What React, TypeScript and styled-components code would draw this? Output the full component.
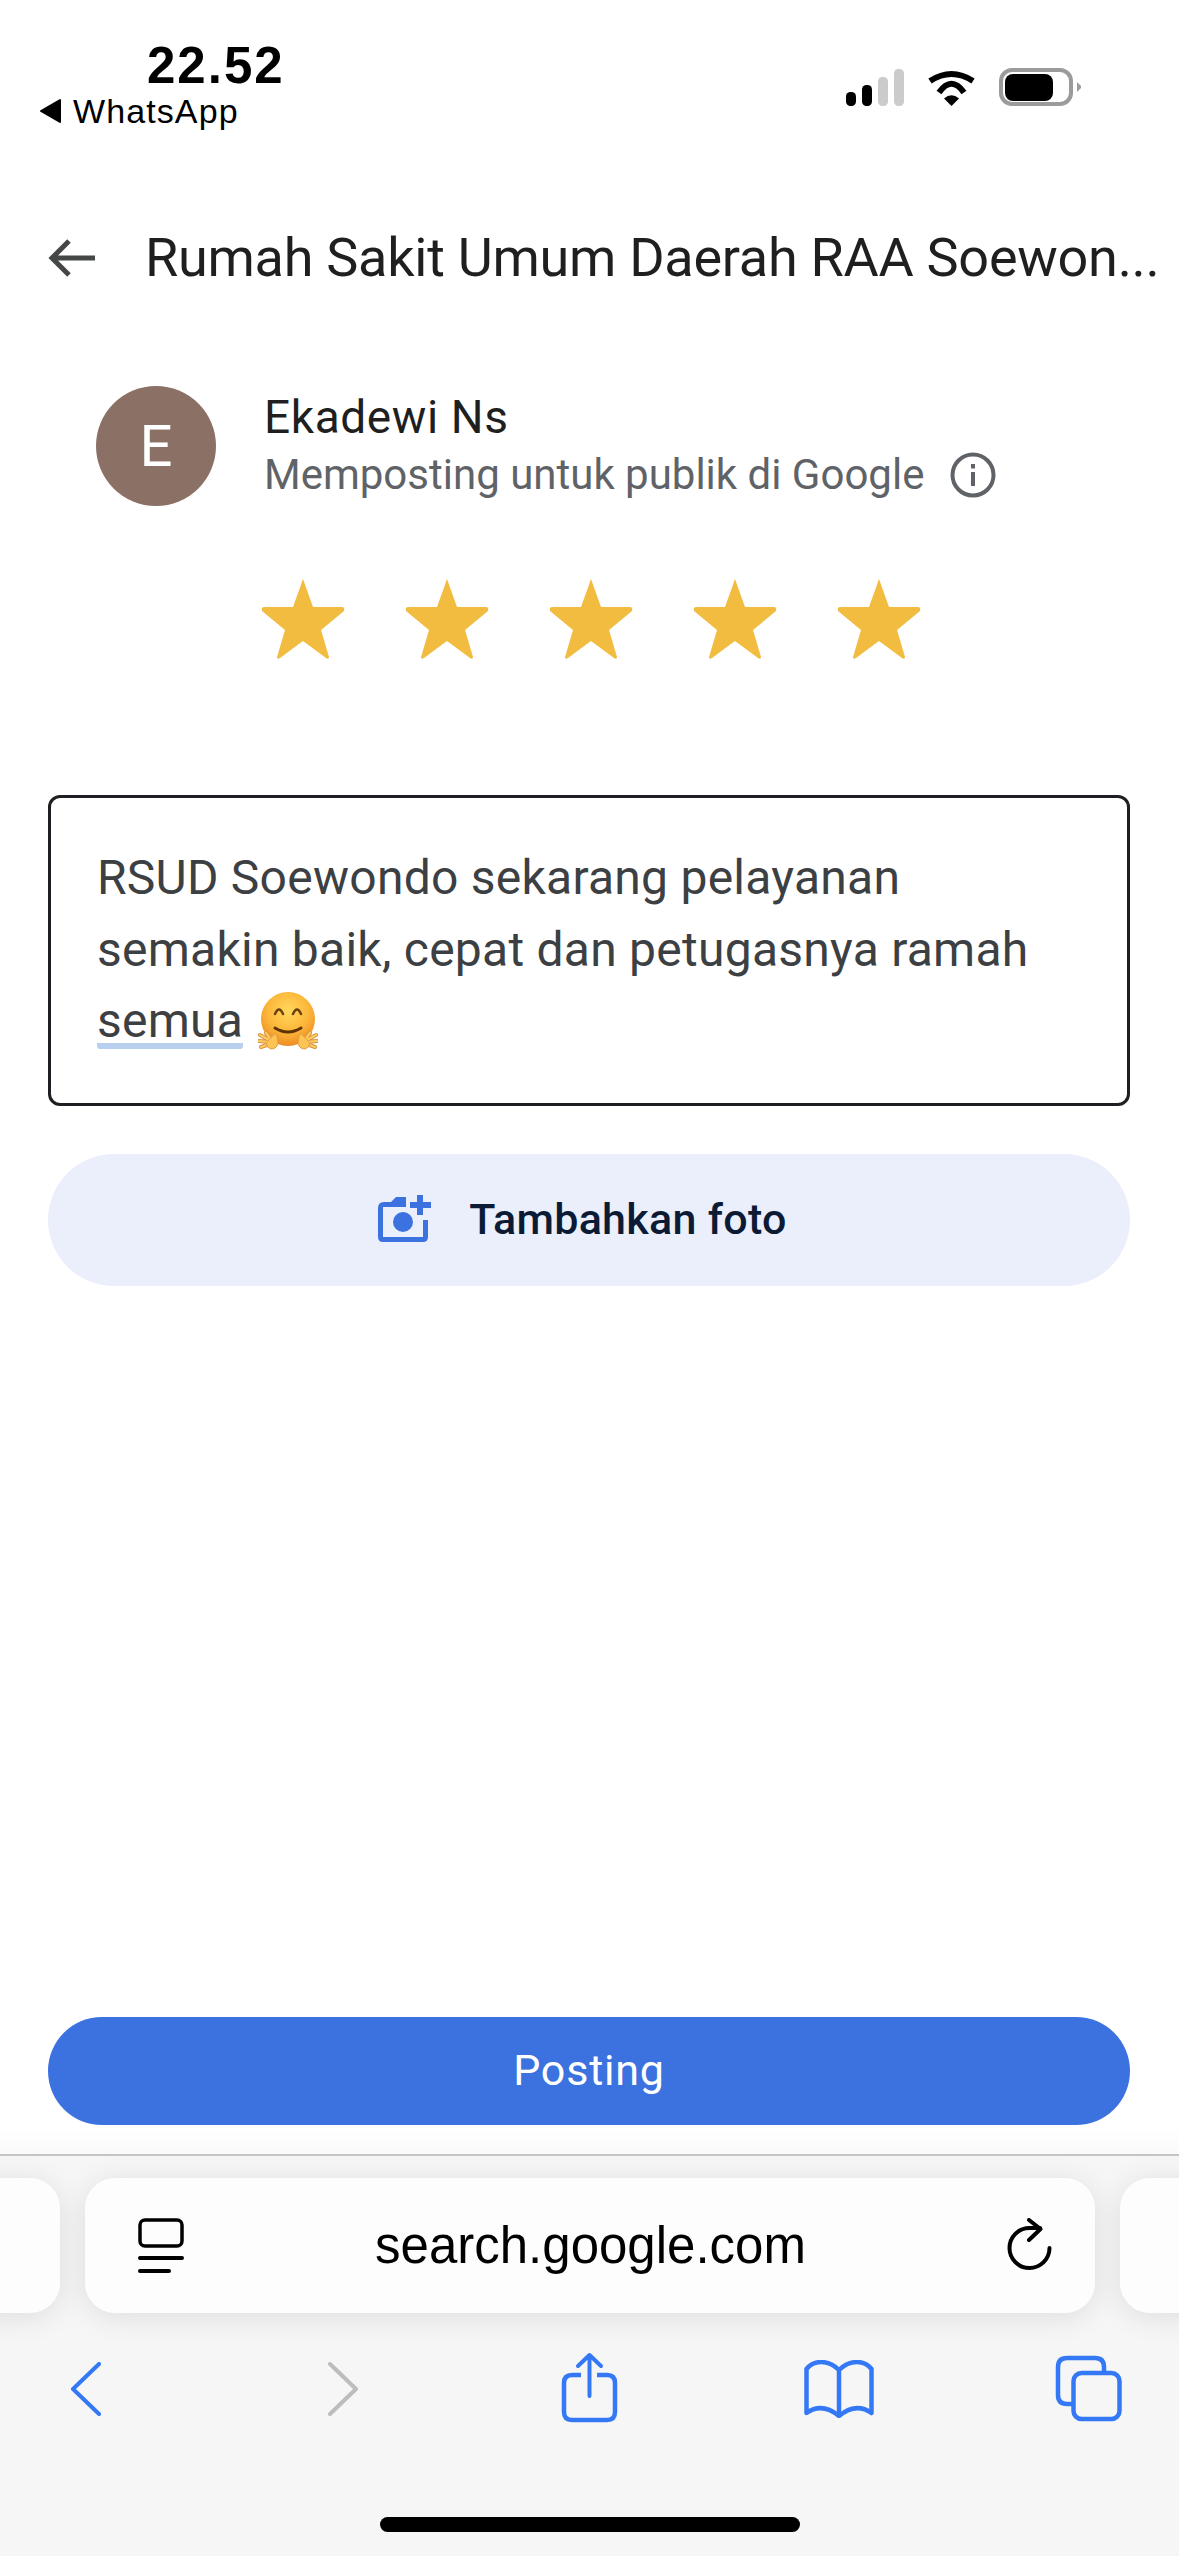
import React from 'react';
import styled, { createGlobalStyle } from 'styled-components';

const GlobalStyle = createGlobalStyle`
  html, body {
    margin: 0;
    padding: 0;
    background: #fff;
  }
  * {
    box-sizing: border-box;
  }
`;

const Hand: React.FC<{ flip?: boolean }> = ({ flip }) => (
  <g transform={flip ? 'translate(60 0) scale(-1 1)' : undefined}>
    <path d="M13 50 L2 44 M13 51 L1 50 M14 52 L3 56 M14 50 L8 42" stroke="#d9903f" strokeWidth="4" strokeLinecap="round" />
    <path d="M13 50 L2 44 M13 51 L1 50 M14 52 L3 56 M14 50 L8 42" stroke="#fbcb62" strokeWidth="2.200" strokeLinecap="round" />
    <path d="M8 52 Q14 45 18 42 L20 50 Q20 58 13 58 Q9 57 8 52 Z" fill="#fbc453" stroke="#e39c40" strokeWidth="1" />
  </g>
);

const App: React.FC = () => (
  <Page>
    <GlobalStyle />
    <StatusBar>
      <StatusLeft>
        <Time>22.52</Time>
        <BackLink>
          <svg width="24" height="26" viewBox="0 0 24 26">
            <path d="M22 2 L22 24 L3 13 Z" fill="#000" stroke="#000" strokeWidth="2" strokeLinejoin="round" />
          </svg>
          <span>WhatsApp</span>
        </BackLink>
      </StatusLeft>
      <StatusIcons>
        <svg width="58" height="38" viewBox="0 0 58 38">
          <rect x="0" y="24" width="10" height="14" rx="4.500" fill="#000" />
          <rect x="16" y="17" width="10" height="21" rx="4.500" fill="#000" />
          <rect x="32" y="9" width="10" height="29" rx="4.500" fill="#cbcbcb" />
          <rect x="48" y="1" width="10" height="37" rx="4.500" fill="#cbcbcb" />
        </svg>
        <svg width="51" height="38" viewBox="0 0 51 38">
          <path d="M4 13 Q25.500 -1 47 13" fill="none" stroke="#000" strokeWidth="6" />
          <path d="M13 24.500 Q25.500 7 38 24.500" fill="none" stroke="#000" strokeWidth="6" />
          <path d="M25.500 38 L18 30.500 Q25.500 24 33 30.500 Z" fill="#000" />
        </svg>
        <svg width="83" height="38" viewBox="0 0 83 38">
          <rect x="2" y="2" width="70" height="34" rx="11" fill="#fff" stroke="#9b9b9b" strokeWidth="4" />
          <rect x="6" y="6" width="48" height="27" rx="8" fill="#000" />
          <path d="M78 14 L82 18 V20 L78 24 Z" fill="#9b9b9b" />
        </svg>
      </StatusIcons>
    </StatusBar>

    <Header>
      <svg width="48" height="38" viewBox="0 0 48 38">
        <path d="M47 19 H5 M21 2 L4 19 L21 36" fill="none" stroke="#444746" strokeWidth="5" />
      </svg>
      <Title>Rumah Sakit Umum Daerah RAA Soewon...</Title>
    </Header>

    <Profile>
      <Avatar>E</Avatar>
      <ProfileText>
        <Name>Ekadewi Ns</Name>
        <SubRow>
          <Sub>Memposting untuk publik di Google</Sub>
          <svg width="46" height="46" viewBox="0 0 46 46">
            <circle cx="23" cy="23" r="20.500" fill="none" stroke="#5f6368" strokeWidth="4" />
            <rect x="21" y="20" width="4" height="14" fill="#5f6368" />
            <rect x="21" y="12" width="4" height="4.500" fill="#5f6368" />
          </svg>
        </SubRow>
      </ProfileText>
    </Profile>

    <Stars>
      {[0, 1, 2, 3, 4].map((i) => (
        <svg key={i} width="84" height="80" viewBox="0 0 84 80">
          <path
            d="M42 0 L52 28 L81 28 Q84 28 83 32 L60 51 L68 78 Q68 81 65 79 L42 62 L19 79 Q16 81 16 78 L24 51 L1 32 Q0 28 3 28 L32 28 Z"
            fill="#f1bc3f"
          />
        </svg>
      ))}
    </Stars>

    <ReviewBox>
      <ReviewLine>RSUD Soewondo sekarang pelayanan</ReviewLine>
      <ReviewLine>semakin baik, cepat dan petugasnya ramah</ReviewLine>
      <ReviewLine>
        <Marked>semua</Marked>
        <svg width="60" height="60" viewBox="0 0 60 60">
          <defs>
            <radialGradient id="face" cx="50%" cy="35%" r="65%">
              <stop offset="0%" stopColor="#ffd85c" />
              <stop offset="60%" stopColor="#fcb63a" />
              <stop offset="100%" stopColor="#ee8d24" />
            </radialGradient>
          </defs>
          <circle cx="30" cy="28" r="27" fill="url(#face)" />
          <path d="M17 23 Q21 14 25 23 M35 23 Q39 14 43 23" fill="none" stroke="#6b3f10" strokeWidth="2.500" strokeLinecap="round" />
          <path d="M17 37 Q30 45 43 37" fill="none" stroke="#5c3308" strokeWidth="3" strokeLinecap="round" />
          <Hand />
          <Hand flip />
        </svg>
      </ReviewLine>
    </ReviewBox>

    <AddPhoto>
      <svg width="54" height="48" viewBox="0 0 54 48">
        <path d="M0 13 Q0 7 6 7 H13 L18 2 H28 V12 H5 V42 H45 V25 H50 V42 Q50 47 45 47 H5 Q0 47 0 42 Z" fill="#3b72e0" />
        <circle cx="25" cy="27" r="10" fill="#3b72e0" />
        <path d="M32 10 H53 M42 0 V20" stroke="#3b72e0" strokeWidth="6" fill="none" />
      </svg>
      <span>Tambahkan foto</span>
    </AddPhoto>

    <PostArea>
      <PostButton>Posting</PostButton>
    </PostArea>

    <BrowserBar>
      <TabStrip>
        <SideTab />
        <UrlCard>
          <svg width="46" height="56" viewBox="0 0 46 56">
            <rect x="2" y="2" width="42" height="26" rx="5" fill="none" stroke="#000" strokeWidth="3.500" />
            <path d="M2 40 H44 M2 53 H31" stroke="#000" strokeWidth="4" strokeLinecap="round" />
          </svg>
          <UrlText>search.google.com</UrlText>
          <svg width="48" height="56" viewBox="0 0 48 56">
            <path d="M44.500 30 A20 20 0 1 1 24.500 10 H35" fill="none" stroke="#000" strokeWidth="4" strokeLinecap="round" />
            <path d="M24 2 L35.500 11 L24 22" fill="none" stroke="#000" strokeWidth="4" strokeLinecap="round" strokeLinejoin="round" />
          </svg>
        </UrlCard>
        <SideTab />
      </TabStrip>

      <Toolbar>
        <svg width="32" height="54" viewBox="0 0 32 54">
          <path d="M29 2 L3 27 L29 52" fill="none" stroke="#3478f6" strokeWidth="4" strokeLinecap="round" strokeLinejoin="round" />
        </svg>
        <svg width="32" height="54" viewBox="0 0 32 54">
          <path d="M3 2 L29 27 L3 52" fill="none" stroke="#bdbdbd" strokeWidth="4" strokeLinecap="round" strokeLinejoin="round" />
        </svg>
        <svg width="58" height="74" viewBox="0 0 58 74">
          <path d="M20 23 H11 Q3 23 3 31 V60 Q3 68 11 68 H46 Q54 68 54 60 V31 Q54 23 46 23 H36" fill="none" stroke="#3478f6" strokeWidth="4.500" />
          <path d="M28.500 44 V3 M17 14 L28.500 3 L40 14" fill="none" stroke="#3478f6" strokeWidth="4" strokeLinecap="round" strokeLinejoin="round" />
        </svg>
        <svg width="70" height="58" viewBox="0 0 70 58">
          <path d="M35 10 Q27 2 17 2 Q8 2 2.500 9 V53 Q18 42 35 56 Q52 42 67.500 53 V9 Q62 2 53 2 Q43 2 35 10 V56" fill="none" stroke="#3478f6" strokeWidth="4.500" strokeLinejoin="round" strokeLinecap="round" />
        </svg>
        <svg width="70" height="68" viewBox="0 0 70 68">
          <path d="M18 49 H13 Q4 49 4 40 V12 Q4 3 13 3 H41 Q50 3 50 12 V18" fill="none" stroke="#3478f6" strokeWidth="4.500" />
          <rect x="19.500" y="18" width="46" height="46" rx="8" fill="none" stroke="#3478f6" strokeWidth="4.500" />
        </svg>
      </Toolbar>

      <HomeIndicator />
    </BrowserBar>
  </Page>
);

const Page = styled.div`
  display: flex;
  flex-direction: column;
  width: 1179px;
  height: 2556px;
  overflow: hidden;
  background: #fff;
  font-family: Roboto, 'Liberation Sans', sans-serif;
`;

const StatusBar = styled.div`
  display: flex;
  justify-content: space-between;
  align-items: flex-start;
  height: 136px;
  padding: 39px 97px 0 38px;
`;

const StatusLeft = styled.div`
  display: flex;
  flex-direction: column;
  align-items: flex-start;
`;

const Time = styled.div`
  margin-left: 109px;
  font-family: 'Liberation Sans', Arial, sans-serif;
  font-size: 51px;
  font-weight: 700;
  line-height: 54px;
  letter-spacing: 2px;
  color: #000;
`;

const BackLink = styled.div`
  display: flex;
  align-items: center;
  gap: 11px;
  margin-top: -2px;
  font-family: 'Liberation Sans', Arial, sans-serif;
  font-size: 34px;
  line-height: 40px;
  letter-spacing: 1.100px;
  color: #000;
`;

const StatusIcons = styled.div`
  display: flex;
  align-items: flex-start;
  gap: 22px;
  padding-top: 29px;
`;

const Header = styled.div`
  display: flex;
  align-items: center;
  gap: 49px;
  height: 116px;
  margin-top: 64px;
  padding: 0 0 0 48px;
`;

const Title = styled.div`
  font-size: 54px;
  line-height: 64px;
  letter-spacing: -0.270px;
  color: #1f1f1f;
  white-space: nowrap;
`;

const Profile = styled.div`
  display: flex;
  align-items: center;
  gap: 48px;
  margin-top: 70px;
  padding-left: 96px;
`;

const Avatar = styled.div`
  display: flex;
  align-items: center;
  justify-content: center;
  width: 120px;
  height: 120px;
  border-radius: 50%;
  background: #8a7065;
  color: #fff;
  font-size: 58px;
`;

const ProfileText = styled.div`
  display: flex;
  flex-direction: column;
  gap: 4px;
`;

const Name = styled.div`
  font-size: 46px;
  line-height: 54px;
  letter-spacing: 0.600px;
  color: #1f1f1f;
`;

const SubRow = styled.div`
  display: flex;
  align-items: center;
  gap: 26px;
`;

const Sub = styled.div`
  font-size: 42px;
  line-height: 54px;
  color: #5f6368;
`;

const Stars = styled.div`
  display: flex;
  justify-content: center;
  gap: 60px;
  margin: 73px 0 0 3px;
`;

const ReviewBox = styled.div`
  display: flex;
  flex-direction: column;
  flex: none;
  width: 1082px;
  height: 311px;
  margin: 136px 0 0 48px;
  padding: 43px 0 0 46px;
  border: 3px solid #1f1f23;
  border-radius: 12px;
`;

const ReviewLine = styled.div`
  display: flex;
  align-items: center;
  gap: 15px;
  height: 72px;
  font-size: 48px;
  letter-spacing: 0.250px;
  color: #3c4043;
  white-space: nowrap;
`;

const Marked = styled.span`
  margin-top: 6px;
  border-bottom: 6px solid #b8cff0;
  border-radius: 3px;
  line-height: 44px;
`;

const AddPhoto = styled.button`
  display: flex;
  flex: none;
  align-items: center;
  justify-content: center;
  gap: 37px;
  width: 1082px;
  height: 132px;
  margin: 48px 0 0 48px;
  padding: 0 13px 2px 0;
  border: none;
  border-radius: 66px;
  background: #ebeffb;
  color: #0b1b36;
  font-family: inherit;
  font-size: 43px;
  font-weight: 500;
  letter-spacing: 0.300px;
`;

const PostArea = styled.div`
  display: flex;
  flex: 1;
  align-items: flex-end;
  padding: 0 0 29px 48px;
  background: linear-gradient(#fff 97%, #fafafa);
`;

const PostButton = styled.button`
  width: 1082px;
  height: 108px;
  padding: 0 0 3px;
  border: none;
  border-radius: 54px;
  background: #3b72e0;
  color: #fff;
  font-family: inherit;
  font-size: 43px;
  font-weight: 400;
  letter-spacing: 0.800px;
`;

const BrowserBar = styled.div`
  display: flex;
  flex: none;
  flex-direction: column;
  height: 402px;
  border-top: 2px solid #c4c4c4;
  background: #f6f6f6;
`;

const TabStrip = styled.div`
  display: flex;
  gap: 25px;
  margin: 22px 0 0 -60px;
`;

const SideTab = styled.div`
  flex: none;
  width: 120px;
  height: 135px;
  border-radius: 30px;
  background: #fdfdfd;
  box-shadow: 0 4px 30px rgba(0, 0, 0, 0.1);
`;

const UrlCard = styled.div`
  flex: none;
  display: flex;
  align-items: center;
  justify-content: space-between;
  width: 1010px;
  height: 135px;
  padding: 0 42px 0 53px;
  border-radius: 30px;
  background: #fdfdfd;
  box-shadow: 0 4px 30px rgba(0, 0, 0, 0.1);
`;

const UrlText = styled.div`
  margin-right: 8px;
  font-family: 'Liberation Sans', Arial, sans-serif;
  font-size: 51px;
  color: #000;
`;

const Toolbar = styled.div`
  display: grid;
  grid-template-columns: 257px 234px 243px 250px 70px;
  align-items: center;
  height: 72px;
  margin-top: 39px;
  padding-left: 70px;
`;

const HomeIndicator = styled.div`
  flex: none;
  width: 420px;
  height: 15px;
  margin: 93px 0 0 380px;
  border-radius: 8px;
  background: #000;
`;

export default App;
